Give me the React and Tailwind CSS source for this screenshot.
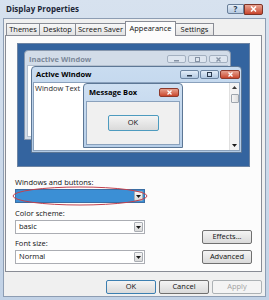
function Tri() {
  return (
    <svg width="5" height="3" viewBox="0 0 5 3">
      <path d="M0 0h5L2.5 3z" fill="#1a1a1a" />
    </svg>
  )
}

function Combo({ children, blue }) {
  return (
    <div
      className={
        blue
          ? "h-[14px] w-[130px] border border-[#3b6ea3] bg-[#3b8fd5] flex items-center"
          : "h-[14px] w-[130px] border border-[#abadb3] bg-white flex items-center"
      }
    >
      <span className="flex-1 pl-[3px] leading-none">{children}</span>
      <div className="mr-[1px] w-[9px] h-[10px] rounded-[1px] border border-[#a9adb3] bg-gradient-to-b from-[#f7f7f7] to-[#d9d9d9] flex items-center justify-center">
        <Tri />
      </div>
    </div>
  )
}

function Btn({ children, def, disabled }) {
  return (
    <div
      className={
        def
          ? "w-[50px] h-[14px] rounded-[2px] border border-[#3c7fb1] bg-gradient-to-b from-[#f4f4f4] to-[#dadada] flex items-center justify-center leading-none"
          : disabled
          ? "w-[50px] h-[14px] rounded-[2px] border border-[#adb2b5] bg-[#f4f4f4] text-[#a3a3a3] flex items-center justify-center leading-none"
          : "w-[50px] h-[14px] rounded-[2px] border border-[#707070] bg-gradient-to-b from-[#f4f4f4] to-[#dadada] flex items-center justify-center leading-none"
      }
    >
      {children}
    </div>
  )
}

function Cap({ kind, active }) {
  const red = kind === "close" && active
  return (
    <div
      className={
        red
          ? "w-[20px] h-[9px] rounded-[2px] border border-[#8d3a2c] bg-gradient-to-b from-[#e5a08f] to-[#c9462c] flex items-center justify-center"
          : active
          ? "w-[19px] h-[9px] rounded-[2px] border border-[#6d85a2] bg-gradient-to-b from-[#e3edf8] to-[#b3c9e2] flex items-center justify-center"
          : "w-[19px] h-[8px] rounded-[2px] border border-[#a3b0c0] bg-[#dde5ef] flex items-center justify-center"
      }
    >
      <svg width="7" height="5" viewBox="0 0 7 5">
        {kind === "min" && <rect x="1" y="3" width="5" height="1.5" fill={active ? "#2b3a4e" : "#8592a4"} />}
        {kind === "max" && <rect x="1.5" y="0.5" width="4" height="4" fill="none" stroke={active ? "#2b3a4e" : "#8592a4"} />}
        {kind === "close" && (
          <path d="M1.5 0.5l4 4M5.5 0.5l-4 4" stroke={red ? "#fff" : "#8592a4"} strokeWidth="1.3" />
        )}
      </svg>
    </div>
  )
}

export default function App() {
  return (
    <div className="w-[269px] h-[300px] bg-gradient-to-b from-[#d7e2ef] to-[#c2d2e6] flex flex-col overflow-hidden font-['Open_Sans',sans-serif] text-[7.5px] text-[#111]">
      {/* caption */}
      <div className="h-[18px] flex items-center pl-[6px] pr-[6px] shrink-0">
        <span className="font-bold text-[8px] text-[#1b2636]">Display Properties</span>
        <div className="ml-auto flex items-center">
          <div className="w-[17px] h-[10px] rounded-l-[2px] border border-[#6a7f99] bg-gradient-to-b from-[#e4edf7] to-[#b5c9e1] flex items-center justify-center text-[8px] font-bold leading-none text-[#243447]">
            ?
          </div>
          <div className="w-[19px] h-[11px] rounded-r-[2px] border border-[#7d3427] bg-gradient-to-b from-[#e8a392] to-[#c7432b] flex items-center justify-center">
            <svg width="7" height="6" viewBox="0 0 7 6">
              <path d="M1 0.5l5 5M6 0.5l-5 5" stroke="#fff" strokeWidth="1.5" />
            </svg>
          </div>
        </div>
      </div>

      {/* client */}
      <div className="mx-[3px] mb-[3px] flex-1 bg-[#f0f0f0] border border-[#8d9db3] flex flex-col px-[1px] pr-[3px] pt-[2px]">
        {/* tabs */}
        <div className="h-[14px] flex items-end pl-[1px] shrink-0">
          <div className="w-[34px] h-[12px] border border-b-0 border-[#898c95] bg-gradient-to-b from-[#f7f7f7] to-[#e3e3e3] flex items-center justify-center">Themes</div>
          <div className="w-[37px] -ml-[1px] h-[12px] border border-b-0 border-[#898c95] bg-gradient-to-b from-[#f7f7f7] to-[#e3e3e3] flex items-center justify-center">Desktop</div>
          <div className="w-[51px] -ml-[1px] h-[12px] border border-b-0 border-[#898c95] bg-gradient-to-b from-[#f7f7f7] to-[#e3e3e3] flex items-center justify-center">Screen Saver</div>
          <div className="w-[51px] -ml-[1px] h-[15px] -mb-[1px] relative z-10 border border-b-0 border-[#898c95] bg-[#fcfcfc] flex items-start pt-[1px] justify-center">Appearance</div>
          <div className="w-[39px] -ml-[1px] h-[12px] border border-b-0 border-[#898c95] bg-gradient-to-b from-[#f7f7f7] to-[#e3e3e3] flex items-center justify-center">Settings</div>
        </div>

        {/* panel */}
        <div className="h-[237px] border border-[#898c95] bg-[#fcfcfc] flex flex-col pl-[9px] pr-[9px] pt-[7px] shrink-0">
          {/* preview */}
          <div className="relative ml-[2px] w-[233px] h-[124px] border border-[#6d84a3] bg-[#34649f] overflow-hidden">
            {/* inactive window */}
            <div className="absolute left-[6px] top-[6px] w-[207px] h-[90px] rounded-t-[4px] border border-[#8797ad] bg-[#d2dce8]">
              <div className="absolute left-[4px] top-[3px] font-bold text-[#7b8899]">Inactive Window</div>
              <div className="absolute right-[2px] top-[4px] flex gap-[2px]">
                <Cap kind="min" />
                <Cap kind="max" />
                <Cap kind="close" />
              </div>
              <div className="absolute left-[2px] right-[2px] top-[14px] bottom-[2px] bg-white border border-[#b4c0cf]" />
            </div>

            {/* active window */}
            <div className="absolute left-[13px] top-[22px] w-[211px] h-[87px] rounded-t-[4px] border border-[#5d7795] bg-gradient-to-b from-[#c9dcf0] to-[#b3cbe6]">
              <div className="absolute left-[4px] top-[2px] font-bold text-black">Active Window</div>
              <div className="absolute right-[1px] top-[3px] flex gap-[1px]">
                <Cap kind="min" active />
                <Cap kind="max" active />
                <Cap kind="close" active />
              </div>
              <div className="absolute left-[1px] right-[1px] top-[15px] bottom-[1px] bg-white border border-[#8aa1bc] flex">
                <div className="flex-1 pl-[1px] pt-[0px] text-[#2a2a2a]">Window Text</div>
                <div className="w-[10px] bg-[#f3f3f3] border-l border-[#e0e0e0] flex flex-col items-center pt-[3px] pb-[3px]">
                  <svg width="5" height="3" viewBox="0 0 5 3">
                    <path d="M0 3h5L2.5 0z" fill="#3a3a3a" />
                  </svg>
                  <div className="mt-[5px] w-[8px] h-[9px] rounded-[1px] border border-[#9ea5ad] bg-gradient-to-r from-[#f5f5f5] to-[#dedede]" />
                  <div className="flex-1" />
                  <Tri />
                </div>
              </div>
            </div>

            {/* message box */}
            <div className="absolute left-[65px] top-[39px] w-[100px] h-[65px] rounded-t-[4px] border border-[#5d7795] bg-gradient-to-b from-[#cfe0f2] to-[#b7cfe9] flex flex-col">
              <div className="h-[17px] flex items-center pl-[5px] pr-[3px] shrink-0">
                <span className="font-bold text-black">Message Box</span>
                <div className="ml-auto">
                  <Cap kind="close" active />
                </div>
              </div>
              <div className="flex-1 mx-[2px] mb-[2px] bg-[#f0f0f0] border border-[#8aa1bc] flex items-center justify-center">
                <div className="w-[51px] h-[16px] rounded-[2px] border border-[#4d9bbf] bg-gradient-to-b from-[#f4f4f4] to-[#dadada] flex items-center justify-center leading-none">
                  OK
                </div>
              </div>
            </div>
          </div>

          {/* settings */}
          <div className="flex mt-[10px]">
            <div className="flex flex-col w-[130px]">
              <div className="h-[12px] flex items-center">Windows and buttons:</div>
              <div className="relative">
                <Combo blue>&nbsp;</Combo>
                <svg className="absolute -left-[3px] -top-[3px]" width="136" height="20" viewBox="0 0 136 20">
                  <ellipse cx="68" cy="10" rx="67" ry="9" fill="none" stroke="#c2414e" strokeWidth="1" />
                </svg>
              </div>
              <div className="h-[12px] mt-[5px] flex items-center">Color scheme:</div>
              <Combo>basic</Combo>
              <div className="h-[12px] mt-[4px] flex items-center">Font size:</div>
              <Combo>Normal</Combo>
            </div>
            <div className="ml-auto flex flex-col justify-end gap-[6px]">
              <Btn>Effects...</Btn>
              <Btn>Advanced</Btn>
            </div>
          </div>
        </div>

        {/* bottom buttons */}
        <div className="mt-[8px] flex justify-end gap-[3px]">
          <Btn def>OK</Btn>
          <Btn>Cancel</Btn>
          <Btn disabled>Apply</Btn>
        </div>
      </div>
    </div>
  )
}
